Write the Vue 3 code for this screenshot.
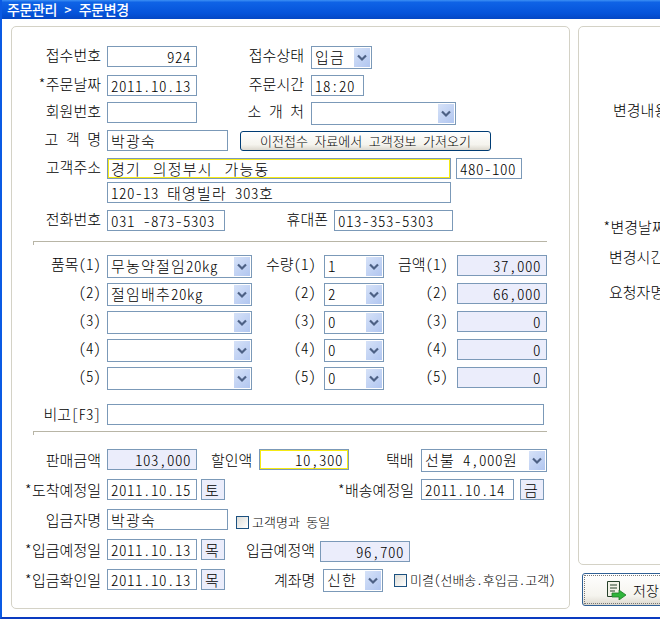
<script setup>
const items = [
  { n: '품목(1)', item: '무농약절임', unit: '20kg', q: '수량(1)', qty: '1', a: '금액(1)', amt: '37,000' },
  { n: '(2)', item: '절임배추', unit: '20kg', q: '(2)', qty: '2', a: '(2)', amt: '66,000' },
  { n: '(3)', item: '', unit: '', q: '(3)', qty: '0', a: '(3)', amt: '0' },
  { n: '(4)', item: '', unit: '', q: '(4)', qty: '0', a: '(4)', amt: '0' },
  { n: '(5)', item: '', unit: '', q: '(5)', qty: '0', a: '(5)', amt: '0' },
]
</script>

<template>
  <div class="window">
    <div class="title">주문관리 &gt; 주문변경</div>
    <div class="body">
      <div class="panel main">
        <div class="row r1">
          <span class="lab l1">접수번호</span><span class="inp right w90">924</span>
          <span class="lab l2">접수상태</span>
          <span class="sel w61 han">입금<i class="arrow"><svg width="12" height="8" viewBox="0 0 12 8"><path d="M2 1.5 6 5.5 10 1.5" fill="none" stroke="#4d6185" stroke-width="2.2"/></svg></i></span>
        </div>
        <div class="row r2">
          <span class="lab l1">*주문날짜</span><span class="inp w90">2011.10.13</span>
          <span class="lab l2">주문시간</span><span class="inp w53">18:20</span>
        </div>
        <div class="row r3">
          <span class="lab l1">회원번호</span><span class="inp w90"></span>
          <span class="lab l2">소 개 처</span>
          <span class="sel w145"><i class="arrow"><svg width="12" height="8" viewBox="0 0 12 8"><path d="M2 1.5 6 5.5 10 1.5" fill="none" stroke="#4d6185" stroke-width="2.2"/></svg></i></span>
        </div>
        <div class="row r4">
          <span class="lab l1">고 객 명</span><span class="inp w121 han">박광숙</span>
          <button class="xp import">이전접수 자료에서 고객정보 가져오기</button>
        </div>
        <div class="row r5">
          <span class="lab l1">고객주소</span><span class="inp w344 yellow han wide">경기 의정부시 가능동</span>
          <span class="inp zip">480-100</span>
        </div>
        <div class="row r6">
          <span class="lab l1"></span><span class="inp w344">120-13 <span class="han">태영빌라</span> 303<span class="han">호</span></span>
        </div>
        <div class="row r7">
          <span class="lab l1">전화번호</span><span class="inp w118">031 -873-5303</span>
          <span class="lab mobile">휴대폰</span><span class="inp w119">013-353-5303</span>
        </div>
        <div class="rule first"></div>
        <div class="items">
          <div v-for="it in items" :key="it.n" class="row item">
            <span class="lab l1">{{ it.n }}</span>
            <span class="sel w145"><span class="han">{{ it.item }}</span>{{ it.unit }}<i class="arrow"><svg width="12" height="8" viewBox="0 0 12 8"><path d="M2 1.5 6 5.5 10 1.5" fill="none" stroke="#4d6185" stroke-width="2.2"/></svg></i></span>
            <span class="lab qlab">{{ it.q }}</span>
            <span class="sel w60">{{ it.qty }}<i class="arrow"><svg width="12" height="8" viewBox="0 0 12 8"><path d="M2 1.5 6 5.5 10 1.5" fill="none" stroke="#4d6185" stroke-width="2.2"/></svg></i></span>
            <span class="lab alab">{{ it.a }}</span>
            <span class="inp right tint w90">{{ it.amt }}</span>
          </div>
        </div>
        <div class="row note">
          <span class="lab l1 low1">비고[F3]</span><span class="inp w437"></span>
        </div>
        <div class="rule second"></div>
        <div class="lower">
          <div class="row s1">
            <span class="lab l1">판매금액</span><span class="inp right tint w90">103,000</span>
            <span class="lab disc">할인액</span><span class="inp right yellow w90 dinp">10,300</span>
            <span class="lab ship">택배</span>
            <span class="sel w126"><span class="han">선불</span> 4,000<span class="han">원</span><i class="arrow"><svg width="12" height="8" viewBox="0 0 12 8"><path d="M2 1.5 6 5.5 10 1.5" fill="none" stroke="#4d6185" stroke-width="2.2"/></svg></i></span>
          </div>
          <div class="row s2">
            <span class="lab l1">*도착예정일</span><span class="inp w90">2011.10.15</span><span class="inp tint day">토</span>
            <span class="lab sendlab">*배송예정일</span><span class="inp w93">2011.10.14</span><span class="inp tint day fri">금</span>
          </div>
          <div class="row s3">
            <span class="lab l1">입금자명</span><span class="inp w121 han">박광숙</span>
            <label class="check same"><i class="box"></i>고객명과 동일</label>
          </div>
          <div class="row s4">
            <span class="lab l1">*입금예정일</span><span class="inp w90">2011.10.13</span><span class="inp tint day">목</span>
            <span class="lab planlab">입금예정액</span><span class="inp right tint w90 plan">96,700</span>
          </div>
          <div class="row s5">
            <span class="lab l1">*입금확인일</span><span class="inp w90">2011.10.13</span><span class="inp tint day">목</span>
            <span class="lab acclab">계좌명</span>
            <span class="sel w60 han">신한<i class="arrow"><svg width="12" height="8" viewBox="0 0 12 8"><path d="M2 1.5 6 5.5 10 1.5" fill="none" stroke="#4d6185" stroke-width="2.2"/></svg></i></span>
            <label class="check unpaid"><i class="box"></i>미결(선배송.후입금.고객)</label>
          </div>
        </div>
      </div>
      <div class="side">
        <div class="panel right-panel">
          <span class="lab rl1">변경내용</span>
          <span class="lab rl2">*변경날짜</span>
          <span class="lab rl3">변경시간</span>
          <span class="lab rl4">요청자명</span>
        </div>
        <button class="xp save">
          <svg width="22" height="20" viewBox="0 0 22 20"><path d="M1.5 1.5h12v15h-12z" fill="#f3f3e8" stroke="#26402a"/><path d="M4 5h7M4 8h7M4 11h5" stroke="#26402a"/><path d="M6 13h7v-3l7 5-7 5v-3H6z" fill="#2fb53a" stroke="#1e7a28" stroke-width=".8"/></svg>
          <span>저장[F9]</span>
        </button>
      </div>
    </div>
  </div>
</template>

<style scoped>
.window {
  width: 660px;
  height: 619px;
  overflow: hidden;
  box-sizing: border-box;
  background: #fff;
  border-left: 2px solid #0a5ae4;
  border-bottom: 2px solid #0a3bc0;
  font: 300 15px/20px "Noto Sans CJK KR", sans-serif;
  font-feature-settings: "hwid";
  color: #000;
}
.title {
  height: 19px;
  margin-left: -2px;
  padding-left: 7px;
  background: linear-gradient(#3d90f5 0, #0f63e6 12%, #0553da 70%, #0447c4 100%);
  color: #fff;
  font: 500 14px/19px "Noto Sans CJK KR", sans-serif;
  font-feature-settings: "hwid";
  letter-spacing: -0.4px;
  word-spacing: 1px;
}
.body {
  display: flex;
  align-items: flex-start;
  gap: 8px;
  padding: 7px 0 0 9px;
}
.panel {
  box-sizing: border-box;
  border: 1.5px solid #d4d2c6;
  border-radius: 5px;
  flex: none;
}
.main {
  width: 559px;
  height: 583px;
  padding-top: 19px;
}
.side { width: 120px; flex: none; }
.right-panel {
  width: 120px;
  height: 539px;
  display: flex;
  flex-direction: column;
  align-items: flex-start;
}
.rl1 { margin: 74px 0 0 34px; }
.rl2 { margin: 99px 0 0 24px; }
.rl3 { margin: 12px 0 0 30px; }
.rl4 { margin: 17px 0 0 30px; }
.row { display: flex; align-items: flex-start; }
.lab {
  display: block;
  box-sizing: border-box;
  flex: none;
  white-space: pre;
  line-height: 18px;
}
.l1 { width: 89px; text-align: right; margin-right: 6px; }
.l2 { width: 60px; margin-left: 47px; margin-right: 7px; text-align: right; }
.low1 { margin-top: 1px; }
.lower .lab { margin-top: 2px; }
.r1 { height: 29px; }
.r2 { height: 27px; }
.r3 { height: 28px; }
.r4 { height: 28px; }
.r5 { height: 24px; }
.r6 { height: 28px; }
.r7 { height: 31px; }
.inp, .sel {
  display: block;
  box-sizing: border-box;
  flex: none;
  height: 21px;
  border: 1px solid #7b99b8;
  background: #fff;
  padding: 0 3px;
  white-space: pre;
  overflow: hidden;
  line-height: 19px;
  letter-spacing: 0.5px;
}
.sel { height: 23px; line-height: 20px; position: relative; padding-right: 20px; }
.han { letter-spacing: 1.2px; }
.wide { word-spacing: 3px; }
.arrow {
  position: absolute;
  right: 1px;
  top: 1px;
  bottom: 1px;
  width: 16px;
  background: linear-gradient(135deg, #d6e2f8, #b1c6f0);
  display: flex;
  align-items: center;
  justify-content: center;
}
.right { text-align: right; padding-right: 5px; }
.tint { background: #ebedfb; }
.yellow { box-shadow: inset 0 0 0 1px #f5ea14; }
.w90 { width: 90px; }
.w53 { width: 53px; }
.w61 { width: 61px; }
.w60 { width: 60px; }
.w93 { width: 93px; }
.w118 { width: 118px; }
.w119 { width: 119px; }
.w121 { width: 121px; }
.w126 { width: 126px; }
.w145 { width: 145px; }
.w344 { width: 344px; }
.w437 { width: 437px; }
.zip { width: 66px; margin-left: 5px; }
.mobile { margin-left: 56px; margin-right: 6px; width: 47px; text-align: right; }
.xp {
  box-sizing: border-box;
  border: 1px solid #003c74;
  border-radius: 3px;
  background: linear-gradient(#fff, #f5f4ee 70%, #dcd8ce);
  color: #000;
  font: 300 14px/18px "Noto Sans CJK KR", sans-serif;
  font-feature-settings: "hwid";
  padding: 0;
}
.import { width: 251px; height: 20px; margin: 1px 0 0 12px; font-size: 13px; }
.rule {
  height: 4px;
  margin-left: 21px;
  width: 514px;
  border-top: 1.5px solid #b8b5a6;
  border-left: 1px solid #b8b5a6;
  box-sizing: border-box;
}
.first { margin-bottom: 10px; }
.item { height: 28px; }
.qlab { width: 64px; margin-right: 8px; text-align: right; }
.alab { width: 64px; margin-right: 9px; text-align: right; }
.note { margin-top: 9px; height: 27px; }
.second { margin-bottom: 14px; }
.s1, .s2, .s3, .s4 { height: 30px; }
.s5 { height: 24px; }
.disc { margin-left: 14px; margin-right: 7px; width: 41px; }
.dinp { width: 90px; }
.ship { margin-left: 37px; margin-right: 7px; width: 28px; }
.day { width: 24px; margin-left: 4px; padding: 0 3px; }
.sendlab { width: 92px; margin-left: 97px; margin-right: 7px; text-align: right; }
.fri { margin-left: 6px; }
.check { display: flex; align-items: center; height: 18px; font-size: 13px; white-space: pre; }
.box {
  display: block;
  box-sizing: border-box;
  width: 13px;
  height: 13px;
  margin-right: 3px;
  border: 1px solid #1c5180;
  background: linear-gradient(135deg, #dcdcd7, #fff);
}
.same { margin: 4px 0 0 8px; }
.planlab { margin-left: 21px; margin-right: 5px; width: 69px; text-align: right; }
.plan { margin-top: 2px; }
.acclab { margin-left: 49px; margin-right: 8px; width: 41px; text-align: right; }
.unpaid { margin: 2px 0 0 11px; }
.save {
  display: flex;
  align-items: center;
  gap: 5px;
  width: 120px;
  height: 33px;
  margin: 8px 0 0 4px;
  padding-left: 23px;
  border: 1.5px solid #2f5f94;
  outline: 1px dotted #777;
  outline-offset: -3px;
  white-space: nowrap;
}
</style>
